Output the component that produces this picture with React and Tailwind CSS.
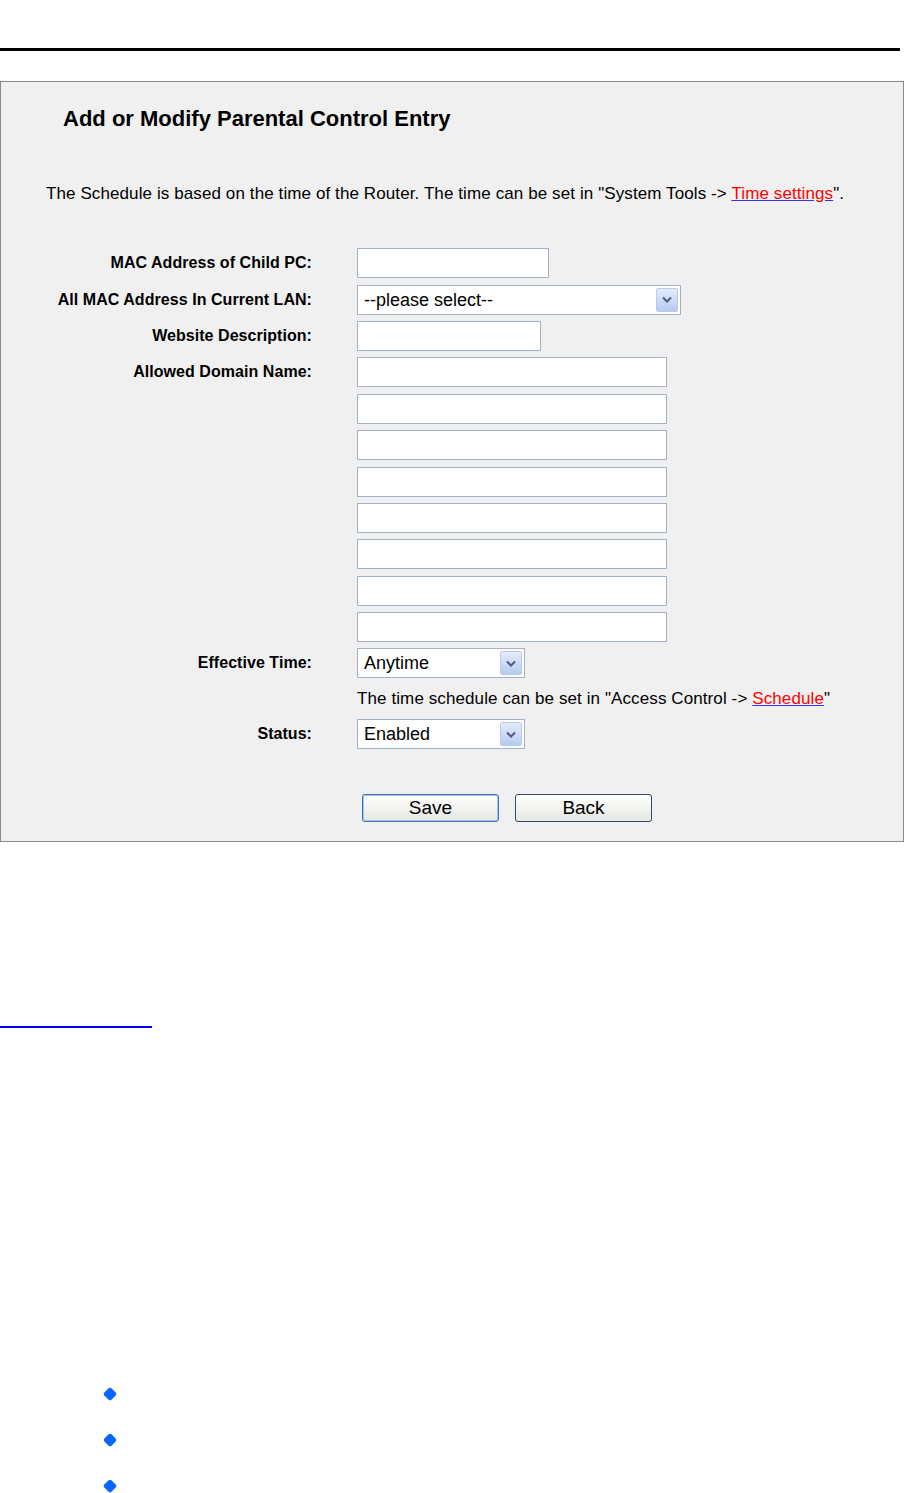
import React from 'react';

const font = { fontFamily: '"Liberation Sans", Arial, sans-serif' };

function TextBox({ width }) {
  return (
    <div
      className={`h-[30px] border border-[#a3b1c4] bg-white ${width}`}
    />
  );
}

function Select({ width, value }) {
  return (
    <div className={`flex h-[30px] items-center justify-between border border-[#a3b1c4] bg-white pl-[6px] pr-[2px] ${width}`}>
      <span className="text-[18px] leading-none text-black">{value}</span>
      <span className="flex h-[24px] w-[22px] items-center justify-center rounded-[2px] border border-[#b9cbec] bg-gradient-to-b from-[#e4ecfb] to-[#b7caf0]">
        <svg width="10" height="7" viewBox="0 0 10 7">
          <path d="M1 1.5 L5 5.5 L9 1.5" fill="none" stroke="#4a5d82" strokeWidth="2" />
        </svg>
      </span>
    </div>
  );
}

function Row({ label, children, h = 'h-[36.4px]' }) {
  return (
    <div className={`grid grid-cols-[311px_1fr] gap-x-[45px] ${h}`}>
      <div className="flex items-center justify-end text-[16px] font-bold tracking-[0.05px] text-black">
        {label}
      </div>
      <div className="flex items-center">{children}</div>
    </div>
  );
}

function Button({ children, primary }) {
  return (
    <button
      className={`h-[28px] w-[137px] rounded-[3px] border bg-gradient-to-b from-white to-[#e6e6e2] text-[19px] leading-none text-black ${
        primary
          ? 'border-[#3b6fb7] shadow-[inset_0_0_0_1px_#a8c4ee]'
          : 'border-[#2d4a6b]'
      }`}
    >
      {children}
    </button>
  );
}

export default function App() {
  const domains = [0, 1, 2, 3, 4, 5, 6];

  return (
    <div className="h-[1493px] w-[904px] bg-white" style={font}>
      <div className="pt-[48px]">
        <div className="h-[3px] w-[900px] bg-black" />
      </div>

      <div className="mt-[30px] h-[761px] border border-[#8a8a8a] bg-[#f0f0f0]">
        <h2 className="pl-[62px] pt-[24px] text-[22px] font-bold leading-[26px] text-black">
          Add or Modify Parental Control Entry
        </h2>

        <p className="mt-[52px] pl-[45px] text-[17px] leading-[20px] tracking-[0.1px] text-black">
          The Schedule is based on the time of the Router. The time can be set in "System Tools -&gt;{' '}
          <a className="text-[#ff0000] underline decoration-[#3333ff]">Time settings</a>".
        </p>

        <div className="mt-[41px]">
          <Row label="MAC Address of Child PC:">
            <TextBox width="w-[192px]" />
          </Row>
          <Row label="All MAC Address In Current LAN:">
            <Select width="w-[324px]" value="--please select--" />
          </Row>
          <Row label="Website Description:">
            <TextBox width="w-[184px]" />
          </Row>
          {domains.map((i) => (
            <Row key={i} label={i === 0 ? 'Allowed Domain Name:' : ''}>
              <TextBox width="w-[310px]" />
            </Row>
          ))}
          <Row label="">
            <TextBox width="w-[310px]" />
          </Row>
          <Row label="Effective Time:">
            <Select width="w-[168px]" value="Anytime" />
          </Row>
          <Row label="" h="h-[35px]">
            <span className="text-[17px] tracking-[0.1px] text-black">
              The time schedule can be set in "Access Control -&gt;{' '}
              <a className="text-[#ff0000] underline decoration-[#3333ff]">Schedule</a>"
            </span>
          </Row>
          <Row label="Status:" h="h-[35px]">
            <Select width="w-[168px]" value="Enabled" />
          </Row>
        </div>

        <div className="mt-[42px] flex gap-[16px] pl-[361px]">
          <Button primary>Save</Button>
          <Button>Back</Button>
        </div>
      </div>

      <div className="mt-[184px] h-[2px] w-[152px] bg-[#0000ff]" />

      <div className="mt-[361px] flex flex-col gap-[36px] pl-[105px]">
        {[0, 1, 2].map((i) => (
          <div key={i} className="h-[10px] w-[10px] rotate-45 rounded-[2px] bg-[#0a64ff]" />
        ))}
      </div>
    </div>
  );
}
